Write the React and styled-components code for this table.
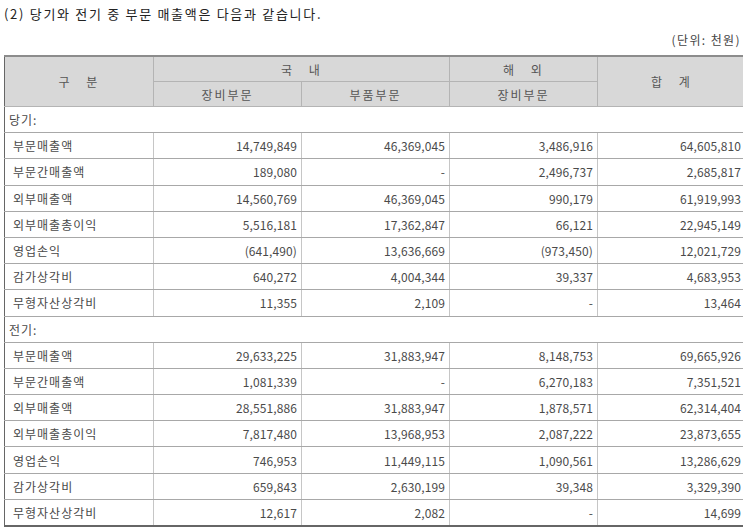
import React from "react";
import styled, { createGlobalStyle } from "styled-components";

const GlobalStyle = createGlobalStyle`
  html, body {
    margin: 0;
    padding: 0;
    overflow: hidden;
    background: #fff;
  }
  body {
    font-family: "Noto Sans CJK KR", "Noto Sans", sans-serif;
    color: #333;
  }
`;

const Page = styled.div`
  width: 737px;
  padding: 4px 0 0 4px;
`;

const Title = styled.p`
  margin: 0;
  font-size: 13px;
  line-height: 20px;
  letter-spacing: 1.7px;
  color: #222;
`;

const Unit = styled.p`
  margin: 7px 0 0;
  text-align: right;
  font-size: 12px;
  line-height: 18px;
  letter-spacing: 1.4px;
  color: #444;
`;

const Table = styled.table`
  width: 741px;
  margin-top: 6px;
  border-collapse: collapse;
  table-layout: fixed;
  border-top: 2px solid #8c8c8c;
  border-left: 1px solid #666;
  border-bottom: 2px solid #666;
  font-size: 12px;
  letter-spacing: 1px;
`;

const Head = styled.th`
  height: 24px;
  padding: 0;
  background: #d8d8d8;
  font-weight: normal;
  color: #555;
  text-align: center;
  letter-spacing: 2px;
  border-right: 1px solid #b4b4b4;
  border-bottom: 1px solid #b4b4b4;
  word-spacing: ${(p) => (p.$spread ? "10px" : "0")};
`;

const Row = styled.tr`
  height: 26.2px;
`;

const Label = styled.td`
  padding: 0 0 0 8px;
  color: #4a4a4a;
  border-right: 1px solid #c6c6c6;
  border-bottom: 1px solid #a8a8a8;
  white-space: nowrap;
`;

const Num = styled.td`
  padding: 0 4px 0 0;
  text-align: right;
  color: #4a4a4a;
  letter-spacing: 0.1px;
  border-right: 1px solid #c6c6c6;
  border-bottom: 1px solid #a8a8a8;
`;

const Section = styled.td`
  padding: 0 0 0 4px;
  color: #4a4a4a;
  border-bottom: 1px solid #a8a8a8;
`;

const current = [
  ["부문매출액", "14,749,849", "46,369,045", "3,486,916", "64,605,810"],
  ["부문간매출액", "189,080", "-", "2,496,737", "2,685,817"],
  ["외부매출액", "14,560,769", "46,369,045", "990,179", "61,919,993"],
  ["외부매출총이익", "5,516,181", "17,362,847", "66,121", "22,945,149"],
  ["영업손익", "(641,490)", "13,636,669", "(973,450)", "12,021,729"],
  ["감가상각비", "640,272", "4,004,344", "39,337", "4,683,953"],
  ["무형자산상각비", "11,355", "2,109", "-", "13,464"],
];

const previous = [
  ["부문매출액", "29,633,225", "31,883,947", "8,148,753", "69,665,926"],
  ["부문간매출액", "1,081,339", "-", "6,270,183", "7,351,521"],
  ["외부매출액", "28,551,886", "31,883,947", "1,878,571", "62,314,404"],
  ["외부매출총이익", "7,817,480", "13,968,953", "2,087,222", "23,873,655"],
  ["영업손익", "746,953", "11,449,115", "1,090,561", "13,286,629"],
  ["감가상각비", "659,843", "2,630,199", "39,348", "3,329,390"],
  ["무형자산상각비", "12,617", "2,082", "-", "14,699"],
];

function Block({ title, rows }) {
  return (
    <>
      <Row>
        <Section colSpan={5}>{title}</Section>
      </Row>
      {rows.map(([label, ...values]) => (
        <Row key={title + label}>
          <Label>{label}</Label>
          {values.map((v, i) => (
            <Num key={i}>{v}</Num>
          ))}
        </Row>
      ))}
    </>
  );
}

export default function App() {
  return (
    <Page>
      <GlobalStyle />
      <Title>(2) 당기와 전기 중 부문 매출액은 다음과 같습니다.</Title>
      <Unit>(단위: 천원)</Unit>
      <Table>
        <colgroup>
          <col style={{ width: 149 }} />
          <col style={{ width: 148 }} />
          <col style={{ width: 148 }} />
          <col style={{ width: 148 }} />
          <col style={{ width: 148 }} />
        </colgroup>
        <thead>
          <tr>
            <Head rowSpan={2} $spread>구 분</Head>
            <Head colSpan={2} $spread>국 내</Head>
            <Head $spread>해 외</Head>
            <Head rowSpan={2} $spread>합 계</Head>
          </tr>
          <tr>
            <Head>장비부문</Head>
            <Head>부품부문</Head>
            <Head>장비부문</Head>
          </tr>
        </thead>
        <tbody>
          <Block title="당기:" rows={current} />
          <Block title="전기:" rows={previous} />
        </tbody>
      </Table>
    </Page>
  );
}
